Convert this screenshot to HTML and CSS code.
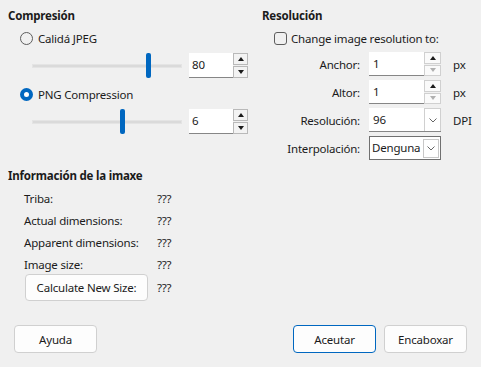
FILE: index.html
```html
<!DOCTYPE html>
<html lang="gl">

<head>
  <meta charset="UTF-8">
  <title>Exportar imaxe</title>
  <link rel="stylesheet" href="styles.css">
</head>

<body>
  <div class="dialog">
    <div class="top">

      <!-- Left column -->
      <div class="left">
        <h2>Compresión</h2>

        <label class="radio">
          <span class="dot"></span>
          Calidá JPEG
        </label>
        <div class="slider-row">
          <div class="slider">
            <span class="track"></span>
            <span class="thumb" style="left: 114px;"></span>
          </div>
          <div class="spin">
            <div class="field">80</div>
            <div class="arrows">
              <span class="up"></span>
              <span class="down"></span>
            </div>
          </div>
        </div>

        <label class="radio">
          <span class="dot on"></span>
          PNG Compression
        </label>
        <div class="slider-row">
          <div class="slider">
            <span class="track"></span>
            <span class="thumb" style="left: 88px;"></span>
          </div>
          <div class="spin">
            <div class="field">6</div>
            <div class="arrows">
              <span class="up"></span>
              <span class="down"></span>
            </div>
          </div>
        </div>

        <h2 class="info-title">Información de la imaxe</h2>
        <div class="info">
          <span>Triba:</span><span>???</span>
          <span>Actual dimensions:</span><span>???</span>
          <span>Apparent dimensions:</span><span>???</span>
          <span>Image size:</span><span>???</span>
          <span><button class="btn calc">Calculate New Size:</button></span><span>???</span>
        </div>
      </div>

      <!-- Right column -->
      <div class="right">
        <h2>Resolución</h2>
        <label class="check">
          <span class="box"></span>
          Change image resolution to:
        </label>

        <div class="form">
          <span class="lbl">Anchor:</span>
          <div class="spin wide">
            <div class="field">1</div>
            <div class="arrows">
              <span class="up"></span>
              <span class="down off"></span>
            </div>
          </div>
          <span class="unit">px</span>

          <span class="lbl">Altor:</span>
          <div class="spin wide">
            <div class="field">1</div>
            <div class="arrows">
              <span class="up"></span>
              <span class="down off"></span>
            </div>
          </div>
          <span class="unit">px</span>

          <span class="lbl">Resolución:</span>
          <div class="combo">
            <div class="value">96</div>
            <span class="drop">
              <svg width="8" height="5" viewBox="0 0 8 5"><polyline points="0.5,0.5 4,4 7.5,0.5" fill="none" stroke="#666" stroke-width="1"/></svg>
            </span>
          </div>
          <span class="unit">DPI</span>

          <span class="lbl">Interpolación:</span>
          <div class="combo framed">
            <div class="value">Denguna</div>
            <span class="drop">
              <svg width="8" height="5" viewBox="0 0 8 5"><polyline points="0.5,0.5 4,4 7.5,0.5" fill="none" stroke="#666" stroke-width="1"/></svg>
            </span>
          </div>
          <span></span>
        </div>
      </div>
    </div>

    <!-- Dialog buttons -->
    <div class="buttons">
      <button class="btn">Ayuda</button>
      <span class="spacer"></span>
      <button class="btn default">Aceutar</button>
      <button class="btn">Encaboxar</button>
    </div>
  </div>
</body>

</html>
```

FILE: styles.css
```css
body {
  margin: 0;
  background: #f0f0f0;
  font-family: "Noto Sans", sans-serif;
  font-size: 11.5px;
  letter-spacing: -0.2px;
  color: #1b1b1b;
}

.dialog {
  height: 367px;
  display: flex;
  flex-direction: column;
  box-sizing: border-box;
}

.top {
  display: flex;
  padding: 8px 0 0 8px;
}

h2 {
  margin: 0;
  font-size: 11.5px;
  font-weight: bold;
  line-height: 16px;
}

/* Left column */
.left {
  width: 254px;
}

.radio {
  display: flex;
  align-items: center;
  gap: 5px;
  height: 20px;
  margin: 4px 0 0 12px;
}

.radio + .slider-row + .radio {
  margin-top: 6px;
}

.dot {
  width: 11px;
  height: 11px;
  border: 1px solid #5d5d5d;
  border-radius: 50%;
  box-sizing: content-box;
}

.dot.on {
  width: 5px;
  height: 5px;
  border: 4px solid #0067c0;
  background: #fff;
}

.slider-row {
  display: flex;
  align-items: center;
  height: 25px;
  margin-top: 5px;
}

.slider {
  position: relative;
  width: 150px;
  height: 25px;
  margin: 0 7px 0 24px;
}

.track {
  position: absolute;
  left: 0;
  right: 0;
  top: 11px;
  height: 2px;
  background: #dadada;
  border: 1px solid #e4e4e4;
}

.thumb {
  position: absolute;
  top: 0;
  width: 5px;
  height: 25px;
  background: #0067c0;
  border-radius: 2px;
}

/* Spin boxes */
.spin {
  display: flex;
  height: 25px;
}

.spin .field {
  width: 44px;
  background: #fff;
  border-bottom: 1px solid #868686;
  padding-left: 3px;
  line-height: 24px;
  box-sizing: border-box;
}

.spin .arrows {
  width: 15px;
  display: flex;
  flex-direction: column;
  gap: 1px;
}

.arrows span {
  flex: 1;
  display: flex;
  align-items: center;
  justify-content: center;
  background: #f3f3f3;
  border: 1px solid #b9b9b9;
}

.arrows .up::after,
.arrows .down::after {
  content: "";
  border-left: 3px solid transparent;
  border-right: 3px solid transparent;
}

.arrows .up::after {
  border-bottom: 4px solid #1b1b1b;
}

.arrows .down::after {
  border-top: 4px solid #1b1b1b;
}

.arrows .down.off::after {
  border-top-color: #b0b0b0;
}

.spin.wide {
  height: 24px;
}

.spin.wide .field {
  width: 55px;
  padding-left: 4px;
  line-height: 23px;
}

.spin.wide .arrows {
  width: 17px;
}

.spin.wide .arrows span {
  background: #fafafa;
  border-color: #d0d0d0;
}

/* Image info */
.info-title {
  margin-top: 34px;
}

.info {
  display: grid;
  grid-template-columns: 133px auto;
  grid-auto-rows: 22px;
  align-items: center;
  margin: 3px 0 0 16px;
}

.info span:nth-last-child(-n+2) {
  margin-top: 3px;
  height: 27px;
  display: flex;
  align-items: center;
}

/* Right column */
.right {
  flex: 1;
}

.check {
  display: flex;
  align-items: center;
  gap: 4px;
  height: 20px;
  margin: 4px 0 0 12px;
}

.check .box {
  width: 11px;
  height: 11px;
  border: 1px solid #5d5d5d;
  border-radius: 3px;
}

.form {
  display: grid;
  grid-template-columns: 98px 72px auto;
  grid-auto-rows: 24px;
  column-gap: 9px;
  row-gap: 4px;
  align-items: center;
  margin-top: 4px;
}

.form .unit {
  margin-left: 3px;
}

.lbl {
  text-align: right;
}

.combo {
  display: flex;
  height: 24px;
  background: #fff;
  border-bottom: 1px solid #868686;
  box-sizing: border-box;
}

.combo .value {
  flex: 1;
  padding-left: 4px;
  line-height: 23px;
}

.combo .drop {
  width: 17px;
  display: flex;
  align-items: center;
  justify-content: center;
  border: 1px solid #d0d0d0;
  border-bottom: none;
  box-sizing: border-box;
}

.combo.framed {
  border: 1px solid #707070;
  height: 24px;
}

.combo.framed .value {
  padding-left: 2px;
  line-height: 22px;
}

.combo.framed .drop {
  width: 16px;
  margin: 2px 1px 1px 0;
  border: 1px solid #c8c8c8;
}

/* Buttons */
.btn {
  width: 83px;
  height: 28px;
  padding: 0;
  font-family: inherit;
  font-size: 11.5px;
  letter-spacing: -0.2px;
  color: #1b1b1b;
  background: #fdfdfd;
  border: 1px solid #d0d0d0;
  border-radius: 4px;
}

.btn.calc {
  width: 123px;
  height: 27px;
  margin-left: 1px;
}

.btn.default {
  border-color: #0067c0;
}

.buttons {
  display: flex;
  gap: 8px;
  margin-top: auto;
  padding: 0 14px 14px;
}

.buttons .spacer {
  flex: 1;
}
```
